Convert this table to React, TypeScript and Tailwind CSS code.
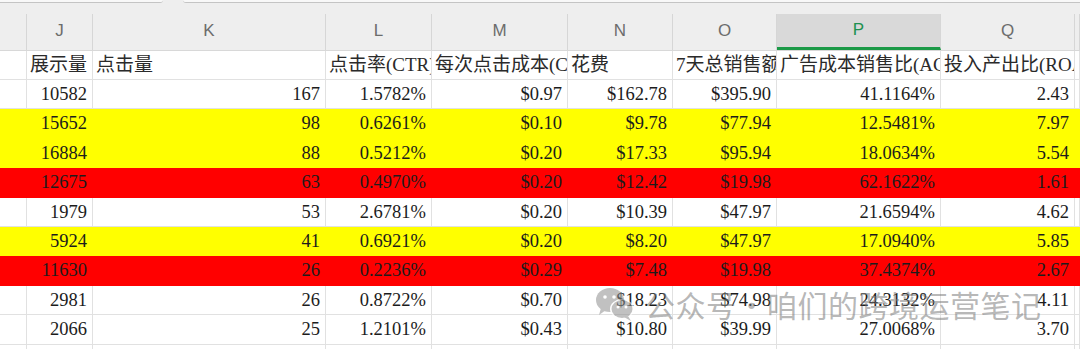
import type { ReactNode } from 'react';

type Fill = 'white' | 'yellow' | 'red';

type Row = {
  fill: Fill;
  values: string[];
};

const rows: Row[] = [
  { fill: 'white', values: ['10582', '167', '1.5782%', '$0.97', '$162.78', '$395.90', '41.1164%', '2.43'] },
  { fill: 'yellow', values: ['15652', '98', '0.6261%', '$0.10', '$9.78', '$77.94', '12.5481%', '7.97'] },
  { fill: 'yellow', values: ['16884', '88', '0.5212%', '$0.20', '$17.33', '$95.94', '18.0634%', '5.54'] },
  { fill: 'red', values: ['12675', '63', '0.4970%', '$0.20', '$12.42', '$19.98', '62.1622%', '1.61'] },
  { fill: 'white', values: ['1979', '53', '2.6781%', '$0.20', '$10.39', '$47.97', '21.6594%', '4.62'] },
  { fill: 'yellow', values: ['5924', '41', '0.6921%', '$0.20', '$8.20', '$47.97', '17.0940%', '5.85'] },
  { fill: 'red', values: ['11630', '26', '0.2236%', '$0.29', '$7.48', '$19.98', '37.4374%', '2.67'] },
  { fill: 'white', values: ['2981', '26', '0.8722%', '$0.70', '$18.23', '$74.98', '24.3132%', '4.11'] },
  { fill: 'white', values: ['2066', '25', '1.2101%', '$0.43', '$10.80', '$39.99', '27.0068%', '3.70'] },
];

const letters = ['J', 'K', 'L', 'M', 'N', 'O', 'P', 'Q'];
const titles = ['展示量', '点击量', '点击率(CTR)', '每次点击成本(CPC)', '花费', '7天总销售额', '广告成本销售比(ACoS)', '投入产出比(ROAS)'];

const gridCols = 'grid grid-cols-[27px_66px_233px_106px_136px_105px_104px_164px_134px_1fr]';

const fillClass: Record<Fill, string> = {
  white: 'bg-white border-[#e1e1e1]',
  yellow: 'bg-[#ffff00] border-[#ffff00]',
  red: 'bg-[#ff0000] border-[#ff0000]',
};

function Cell({ children, className }: { children?: ReactNode; className: string }) {
  return (
    <div className={`h-full overflow-hidden whitespace-nowrap border-r border-b ${className}`}>
      {children}
    </div>
  );
}

function WeChatMark() {
  return (
    <svg width="40" height="36" viewBox="0 0 40 36" className="opacity-55">
      <ellipse cx="15" cy="14" rx="14" ry="12" fill="#8f8f8f" />
      <path d="M6 22 L4 29 L11 24 Z" fill="#8f8f8f" />
      <circle cx="10" cy="11" r="1.8" fill="#fff" />
      <circle cx="19" cy="11" r="1.8" fill="#fff" />
      <ellipse cx="27" cy="23" rx="12" ry="10" fill="#fff" />
      <ellipse cx="27" cy="23" rx="10.5" ry="9" fill="#8f8f8f" />
      <path d="M33 30 L36 35 L29 31 Z" fill="#8f8f8f" />
      <circle cx="23" cy="21" r="1.5" fill="#fff" />
      <circle cx="31" cy="21" r="1.5" fill="#fff" />
    </svg>
  );
}

export default function App() {
  return (
    <div
      className="relative h-[349px] w-[1080px] overflow-hidden bg-white text-[#1c1c1c]"
      style={{ fontFamily: '"Liberation Serif", "Noto Sans CJK SC", serif' }}
    >
      {/* tab strip */}
      <div className="flex h-[5px] bg-[#eeeeee]">
        <div className="h-[3px] w-[163px] rounded-br-[4px] border-b border-[#c4c4c4] bg-[#f8f8f8]" />
        <div className="w-[20px]" />
        <div className="h-[3px] flex-1 rounded-bl-[4px] border-b border-[#c4c4c4] bg-[#f8f8f8]" />
      </div>

      {/* column letters */}
      <div className={`${gridCols} h-[45px] bg-[#eeeeee] pt-[9px]`}>
        <div className="h-full border-r border-[#d6d6d6]" />
        {letters.map((letter) => (
          <div
            key={letter}
            className={`flex h-full items-center justify-center border-r border-[#d6d6d6] pb-[2px] text-[17px] ${
              letter === 'P' ? 'border-b-[3px] border-b-[#1b9a47] bg-[#d9d9d9] text-[#1e9150]' : 'text-[#6c6c6c]'
            }`}
            style={{ fontFamily: '"Liberation Sans", Arial, sans-serif' }}
          >
            {letter}
          </div>
        ))}
        <div className="h-full border-r border-[#d6d6d6]" />
      </div>

      {/* title row */}
      <div className={`${gridCols} h-[30px] border-t border-[#d8d8d8] text-[19px] leading-none`}>
        <Cell className="border-[#e1e1e1]" />
        {titles.map((title) => (
          <Cell key={title} className="flex items-end border-[#e1e1e1] pb-[5px] pl-[3px] text-[#2a2a2a]">
            {title}
          </Cell>
        ))}
        <Cell className="border-[#e1e1e1]" />
      </div>

      {/* data rows */}
      {rows.map((row, index) => (
        <div key={index} className={`${gridCols} h-[29.4px] text-[18.5px] leading-none`}>
          <Cell className={fillClass[row.fill]} />
          {row.values.map((value, i) => (
            <Cell key={i} className={`flex items-center justify-end pr-[5px] ${fillClass[row.fill]}`}>
              {value}
            </Cell>
          ))}
          <Cell className={fillClass[row.fill]} />
        </div>
      ))}
      <div className={`${gridCols} h-[29px]`}>
        {Array.from({ length: 10 }).map((_, i) => (
          <Cell key={i} className={fillClass.white} />
        ))}
      </div>

      {/* watermark */}
      <div className="pointer-events-none absolute left-[595px] top-[286px] flex items-center gap-[10px]">
        <WeChatMark />
        <span
          className="text-[30px] leading-none tracking-[0.5px] text-[#7a7a7a]/55"
          style={{ fontFamily: '"Noto Sans CJK SC", sans-serif' }}
        >
          公众号・咱们的跨境运营笔记
        </span>
      </div>
    </div>
  );
}
